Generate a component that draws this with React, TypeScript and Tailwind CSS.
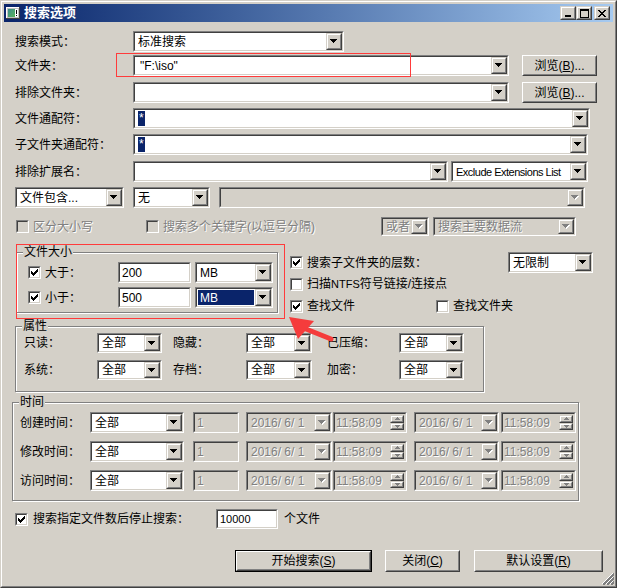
import React from "react";

const sunkenOuter = "border border-t-[#808080] border-l-[#808080] border-b-white border-r-white";
const sunkenInner = "border border-t-[#404040] border-l-[#404040] border-b-[#d4d0c8] border-r-[#d4d0c8]";
const raisedOuter = "border border-t-[#d4d0c8] border-l-[#d4d0c8] border-b-[#404040] border-r-[#404040]";
const raisedInner = "border border-t-white border-l-white border-b-[#808080] border-r-[#808080]";
const dis = "text-[#808080] [text-shadow:1px_1px_0_#ffffff]";

type Kids = { className?: string; children?: React.ReactNode };

function Sunken({ className = "", bg = "bg-white", children }: Kids & { bg?: string }) {
  return (
    <div className={`flex shrink-0 ${sunkenOuter} ${className}`}>
      <div className={`flex flex-1 min-w-0 ${sunkenInner} ${bg}`}>{children}</div>
    </div>
  );
}

function DownArrow({ disabled }: { disabled?: boolean }) {
  const tri = (fill: string, dx: number, dy: number) => (
    <g fill={fill}>
      <rect x={0 + dx} y={0 + dy} width={7} height={1} />
      <rect x={1 + dx} y={1 + dy} width={5} height={1} />
      <rect x={2 + dx} y={2 + dy} width={3} height={1} />
      <rect x={3 + dx} y={3 + dy} width={1} height={1} />
    </g>
  );
  return (
    <svg width="8" height="5" shapeRendering="crispEdges">
      {disabled && tri("#ffffff", 1, 1)}
      {tri(disabled ? "#808080" : "#000000", 0, 0)}
    </svg>
  );
}

function UpArrow() {
  return (
    <svg width="5" height="3" shapeRendering="crispEdges">
      <g fill="#808080">
        <rect x={2} y={0} width={1} height={1} />
        <rect x={1} y={1} width={3} height={1} />
        <rect x={0} y={2} width={5} height={1} />
      </g>
    </svg>
  );
}

function SmallDown() {
  return (
    <svg width="5" height="3" shapeRendering="crispEdges">
      <g fill="#808080">
        <rect x={0} y={0} width={5} height={1} />
        <rect x={1} y={1} width={3} height={1} />
        <rect x={2} y={2} width={1} height={1} />
      </g>
    </svg>
  );
}

function DropBtn({ disabled }: { disabled?: boolean }) {
  return (
    <div className={`flex w-[16px] shrink-0 bg-[#d4d0c8] ${raisedOuter}`}>
      <div className={`flex flex-1 items-center justify-center ${raisedInner}`}>
        <DownArrow disabled={disabled} />
      </div>
    </div>
  );
}

function Combo({
  className = "",
  text,
  disabled,
  selected,
  textClass = "",
}: {
  className?: string;
  text?: React.ReactNode;
  disabled?: boolean;
  selected?: boolean;
  textClass?: string;
}) {
  return (
    <Sunken className={className} bg={disabled ? "bg-[#d4d0c8]" : "bg-white"}>
      <div className="flex flex-1 min-w-0 items-stretch p-[1px] overflow-hidden">
        {selected ? (
          <div className="flex flex-1 items-center bg-[#0a246a] text-white pl-[2px]">{text}</div>
        ) : (
          <div className={`flex items-center pl-[2px] whitespace-nowrap ${disabled ? dis : ""} ${textClass}`}>{text}</div>
        )}
      </div>
      <DropBtn disabled={disabled} />
    </Sunken>
  );
}

function Input({ className = "", text, disabled, textClass = "" }: { className?: string; text?: string; disabled?: boolean; textClass?: string }) {
  return (
    <Sunken className={className} bg={disabled ? "bg-[#d4d0c8]" : "bg-white"}>
      <div className={`flex items-center pl-[2px] whitespace-nowrap ${disabled ? dis : ""} ${textClass}`}>{text}</div>
    </Sunken>
  );
}

function TimeField({ className = "" }: { className?: string }) {
  return (
    <Sunken className={className} bg="bg-[#d4d0c8]">
      <div className={`flex flex-1 items-center pl-[1px] text-[12px] ${dis}`}>11:58:09</div>
      <div className="flex flex-col w-[15px] shrink-0 py-[1px] pr-[1px] gap-0">
        <div className={`flex flex-1 bg-[#d4d0c8] ${raisedOuter}`}>
          <div className={`flex flex-1 items-center justify-center ${raisedInner}`}>
            <UpArrow />
          </div>
        </div>
        <div className={`flex flex-1 bg-[#d4d0c8] ${raisedOuter}`}>
          <div className={`flex flex-1 items-center justify-center ${raisedInner}`}>
            <SmallDown />
          </div>
        </div>
      </div>
    </Sunken>
  );
}

function CheckMark() {
  const px: [number, number, number][] = [
    [6, 0, 1],
    [5, 1, 2],
    [0, 2, 1],
    [4, 2, 3],
    [0, 3, 2],
    [3, 3, 3],
    [0, 4, 5],
    [1, 5, 3],
    [2, 6, 1],
  ];
  return (
    <svg width="7" height="7" shapeRendering="crispEdges">
      {px.map(([x, y, w], i) => (
        <rect key={i} x={x} y={y} width={w} height={1} fill="#000" />
      ))}
    </svg>
  );
}

function Check({ checked, disabled, className = "" }: { checked?: boolean; disabled?: boolean; className?: string }) {
  return (
    <div className={`flex w-[13px] h-[13px] shrink-0 ${sunkenOuter} ${className}`}>
      <div className={`flex flex-1 items-center justify-center ${sunkenInner} ${disabled ? "bg-[#d4d0c8]" : "bg-white"}`}>
        {checked && <CheckMark />}
      </div>
    </div>
  );
}

function Btn({ className = "", children, def }: Kids & { def?: boolean }) {
  const core = (
    <div className="flex flex-1 border border-t-white border-l-white border-b-[#404040] border-r-[#404040]">
      <div className="flex flex-1 items-center justify-center border border-t-[#d4d0c8] border-l-[#d4d0c8] border-b-[#808080] border-r-[#808080]">
        {children}
      </div>
    </div>
  );
  return <div className={`flex shrink-0 bg-[#d4d0c8] ${def ? "border border-black" : ""} ${className}`}>{core}</div>;
}

function Group({ title, className = "", children }: Kids & { title: string }) {
  return (
    <div className={`relative shrink-0 border border-[#808080] shadow-[inset_1px_1px_0_#ffffff,1px_1px_0_#ffffff] ${className}`}>
      <span className="absolute -top-[8px] left-[6px] bg-[#d4d0c8] px-[1px] leading-[14px]">{title}</span>
      {children}
    </div>
  );
}

function TitleBtn({ children, className = "" }: Kids) {
  return (
    <div className={`flex w-[16px] h-[14px] shrink-0 bg-[#d4d0c8] ${raisedOuter} ${className}`}>
      <div className={`flex flex-1 items-center justify-center ${raisedInner}`}>{children}</div>
    </div>
  );
}

function TitleIcon() {
  return (
    <svg width="16" height="16" shapeRendering="crispEdges">
      <rect x="1" y="2" width="14" height="12" fill="#c0c0c0" />
      <rect x="1" y="2" width="14" height="1" fill="#ffffff" />
      <rect x="1" y="2" width="1" height="12" fill="#ffffff" />
      <rect x="1" y="13" width="14" height="1" fill="#404040" />
      <rect x="14" y="2" width="1" height="12" fill="#404040" />
      <defs>
        <linearGradient id="tg" x1="0" y1="0" x2="1" y2="1">
          <stop offset="0" stopColor="#3c8c8c" />
          <stop offset="1" stopColor="#5ab45a" />
        </linearGradient>
      </defs>
      <rect x="3" y="4" width="7" height="8" fill="url(#tg)" />
      <rect x="10" y="4" width="3" height="8" fill="#ffffff" />
      <rect x="11" y="5" width="1" height="4" fill="#000000" />
      <rect x="11" y="10" width="1" height="1" fill="#000000" />
    </svg>
  );
}

function Mn({ c }: { c: string }) {
  return (
    <span>
      (<span className="underline underline-offset-1">{c}</span>)
    </span>
  );
}

function TimeRow({ label, className = "" }: { label: string; className?: string }) {
  return (
    <div className={`flex items-center h-[21px] ${className}`}>
      <span className="w-[77px] pl-[7px] shrink-0">{label}</span>
      <Combo className="w-[94px] h-[21px]" text="全部" />
      <Input className="w-[46px] h-[21px] ml-[9px]" text="1" disabled />
      <Combo className="w-[86px] h-[21px] ml-[7px]" text="2016/ 6/ 1" disabled textClass="whitespace-pre" />
      <TimeField className="w-[74px] h-[21px] ml-[1px]" />
      <Combo className="w-[85px] h-[21px] ml-[7px]" text="2016/ 6/ 1" disabled textClass="whitespace-pre" />
      <TimeField className="w-[75px] h-[21px] ml-[2px]" />
    </div>
  );
}

export default function App() {
  return (
    <div className="relative w-[617px] h-[588px] overflow-hidden bg-[#d4d0c8] text-black text-[12px] leading-[14px] font-['Liberation_Sans','Noto_Sans_CJK_SC',sans-serif] border border-t-[#d4d0c8] border-l-[#d4d0c8] border-b-[#404040] border-r-[#404040]">
      <div className="flex flex-col h-full p-[2px] border border-t-white border-l-white border-b-[#808080] border-r-[#808080]">
        {/* Title bar */}
        <div className="flex items-center h-[18px] shrink-0 bg-linear-to-r from-[#0a246a] to-[#a6caf0] pl-[1px] pr-[3px]">
          <TitleIcon />
          <span className="ml-[3px] text-white font-bold text-[13px]">搜索选项</span>
          <div className="flex-1" />
          <TitleBtn>
            <svg width="8" height="8" shapeRendering="crispEdges">
              <rect x="1" y="6" width="6" height="2" fill="#000" />
            </svg>
          </TitleBtn>
          <TitleBtn>
            <svg width="9" height="9" shapeRendering="crispEdges">
              <rect x="0" y="0" width="9" height="9" fill="#000" />
              <rect x="1" y="2" width="7" height="6" fill="#d4d0c8" />
            </svg>
          </TitleBtn>
          <TitleBtn className="ml-[2px]">
            <svg width="8" height="7" shapeRendering="crispEdges">
              <path d="M0 0h2l2 2.5L6 0h2L5 3.5L8 7H6L4 4.5L2 7H0l3-3.5z" fill="#000" />
            </svg>
          </TitleBtn>
        </div>

        {/* Content */}
        <div className="flex flex-col">
          <div className="flex items-center h-[21px] mt-[9px]">
            <span className="w-[129px] pl-[11px] shrink-0">搜索模式：</span>
            <Combo className="w-[211px] h-[21px]" text="标准搜索" />
          </div>

          <div className="flex items-center h-[21px] mt-[3px]">
            <span className="w-[129px] pl-[11px] shrink-0">文件夹：</span>
            <Combo className="w-[376px] h-[21px]" text={'"F:\\iso"'} textClass="pl-[4px]" />
            <Btn className="w-[75px] h-[21px] ml-[13px]">
              浏览<Mn c="B" />...
            </Btn>
          </div>

          <div className="flex items-center h-[21px] mt-[6px]">
            <span className="w-[129px] pl-[11px] shrink-0">排除文件夹：</span>
            <Combo className="w-[376px] h-[21px]" text="" />
            <Btn className="w-[75px] h-[21px] ml-[13px]">
              浏览<Mn c="B" />...
            </Btn>
          </div>

          <div className="flex items-center h-[21px] mt-[5px]">
            <span className="w-[129px] pl-[11px] shrink-0">文件通配符：</span>
            <Combo
              className="w-[457px] h-[21px]"
              text={<span className="bg-[#0a246a] text-white px-[1px] leading-[15px]">*</span>}
            />
          </div>

          <div className="flex items-center h-[21px] mt-[5px]">
            <span className="w-[129px] pl-[11px] shrink-0">子文件夹通配符：</span>
            <Combo
              className="w-[455px] h-[21px]"
              text={<span className="bg-[#0a246a] text-white px-[1px] leading-[15px]">*</span>}
            />
          </div>

          <div className="flex items-center h-[21px] mt-[6px]">
            <span className="w-[129px] pl-[11px] shrink-0">排除扩展名：</span>
            <Combo className="w-[315px] h-[21px]" text="" />
            <Combo className="w-[137px] h-[21px] ml-[3px]" text="Exclude Extensions List" textClass="text-[11px] tracking-[-0.5px] pl-[1px]" />
          </div>

          <div className="flex items-center h-[21px] mt-[5px]">
            <Combo className="w-[109px] h-[21px] ml-[11px]" text="文件包含..." />
            <Combo className="w-[77px] h-[21px] ml-[9px]" text="无" />
            <Combo className="w-[366px] h-[21px] ml-[9px]" text="" disabled />
          </div>

          <div className="flex items-center h-[19px] mt-[9px]">
            <Check disabled className="ml-[12px]" />
            <span className={`w-[117px] pl-[4px] shrink-0 ${dis}`}>区分大小写</span>
            <Check disabled />
            <span className={`w-[222px] pl-[4px] shrink-0 ${dis}`}>搜索多个关键字(以逗号分隔)</span>
            <Combo className="w-[48px] h-[19px]" text="或者" disabled />
            <Combo className="w-[143px] h-[19px] ml-[4px]" text="搜索主要数据流" disabled />
          </div>

          {/* File size + options */}
          <div className="flex items-start mt-[16px]">
            <Group title="文件大小" className="w-[262px] h-[61px] ml-[12px]">
              <div className="flex flex-col pt-[9px]">
                <div className="flex items-center h-[21px]">
                  <Check checked className="ml-[11px]" />
                  <span className="w-[77px] pl-[4px] shrink-0">大于：</span>
                  <Input className="w-[73px] h-[21px]" text="200" />
                  <Combo className="w-[78px] h-[21px] ml-[4px]" text="MB" />
                </div>
                <div className="flex items-center h-[21px] mt-[4px]">
                  <Check checked className="ml-[11px]" />
                  <span className="w-[77px] pl-[4px] shrink-0">小于：</span>
                  <Input className="w-[73px] h-[21px]" text="500" />
                  <Combo className="w-[78px] h-[21px] ml-[4px]" text="MB" selected />
                </div>
              </div>
            </Group>

            <div className="flex flex-col w-[303px] ml-[12px]">
              <div className="flex items-center h-[21px]">
                <Check checked />
                <span className="pl-[4px]">搜索子文件夹的层数：</span>
                <div className="flex-1" />
                <Combo className="w-[85px] h-[21px]" text="无限制" />
              </div>
              <div className="flex items-center h-[22px]">
                <Check />
                <span className="pl-[4px]">
                  扫描<span className="text-[11px]">NTFS</span>符号链接/连接点
                </span>
              </div>
              <div className="flex items-center h-[22px]">
                <Check checked />
                <span className="w-[133px] pl-[4px] shrink-0">查找文件</span>
                <Check />
                <span className="pl-[4px]">查找文件夹</span>
              </div>
            </div>
          </div>

          {/* Attributes */}
          <Group title="属性" className="w-[469px] h-[66px] ml-[11px] mt-[9px]">
            <div className="flex flex-col pt-[6px]">
              <div className="flex items-center h-[20px]">
                <span className="w-[81px] pl-[8px] shrink-0">只读：</span>
                <Combo className="w-[65px] h-[20px]" text="全部" />
                <span className="w-[84px] pl-[11px] shrink-0">隐藏：</span>
                <Combo className="w-[66px] h-[20px]" text="全部" />
                <span className="w-[87px] pl-[15px] shrink-0">已压缩：</span>
                <Combo className="w-[65px] h-[20px]" text="全部" />
              </div>
              <div className="flex items-center h-[20px] mt-[7px]">
                <span className="w-[81px] pl-[8px] shrink-0">系统：</span>
                <Combo className="w-[65px] h-[20px]" text="全部" />
                <span className="w-[84px] pl-[11px] shrink-0">存档：</span>
                <Combo className="w-[66px] h-[20px]" text="全部" />
                <span className="w-[87px] pl-[15px] shrink-0">加密：</span>
                <Combo className="w-[65px] h-[20px]" text="全部" />
              </div>
            </div>
          </Group>

          {/* Time */}
          <Group title="时间" className="w-[567px] h-[99px] ml-[8px] mt-[10px]">
            <div className="flex flex-col pt-[9px]">
              <TimeRow label="创建时间：" />
              <TimeRow label="修改时间：" className="mt-[8px]" />
              <TimeRow label="访问时间：" className="mt-[8px]" />
            </div>
          </Group>

          <div className="flex items-center h-[20px] mt-[8px]">
            <Check checked className="ml-[11px]" />
            <span className="w-[188px] pl-[5px] shrink-0">搜索指定文件数后停止搜索：</span>
            <Input className="w-[62px] h-[20px]" text="10000" textClass="text-[11px]" />
            <span className="ml-[6px]">个文件</span>
          </div>

          <div className="flex items-center h-[22px] mt-[21px]">
            <Btn def className="w-[137px] h-[22px] ml-[231px]">
              开始搜索<Mn c="S" />
            </Btn>
            <Btn className="w-[75px] h-[22px] ml-[13px]">
              关闭<Mn c="C" />
            </Btn>
            <Btn className="w-[129px] h-[22px] ml-[14px]">
              默认设置<Mn c="R" />
            </Btn>
          </div>
        </div>
      </div>

      {/* size grip */}
      <svg className="absolute right-[2px] bottom-[2px]" width="12" height="12" shapeRendering="crispEdges">
        {[0, 4, 8].map((o) => (
          <g key={o}>
            <path d={`M${12 - 1} ${o}L${o} ${12 - 1}`} stroke="#ffffff" strokeWidth="1" />
            <path d={`M${12} ${o + 1}L${o + 1} ${12}`} stroke="#808080" strokeWidth="1.5" />
          </g>
        ))}
      </svg>

      {/* red annotations */}
      <div className="absolute left-[115px] top-[52px] w-[295px] h-[24px] border border-[#ff3b3b]" />
      <div className="absolute left-[15px] top-[243px] w-[269px] h-[75px] border border-[#ff3b3b]" />
      <svg className="absolute left-[284px] top-[312px]" width="52" height="30">
        <line x1="16" y1="14" x2="46" y2="26" stroke="#f53c3c" strokeWidth="5" strokeLinecap="round" />
        <polygon points="4,4 29,8 13,26" fill="#f53c3c" />
      </svg>
    </div>
  );
}
